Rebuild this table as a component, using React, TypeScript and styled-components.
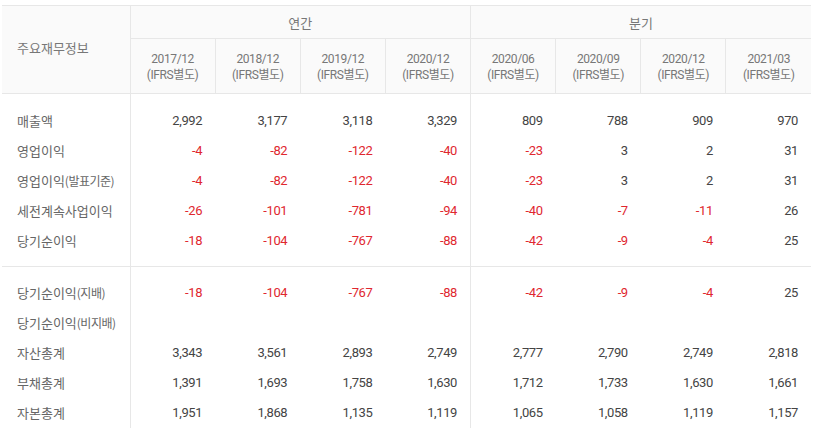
import React from 'react';
import styled, {createGlobalStyle} from 'styled-components';

const GlobalStyle = createGlobalStyle`
	body {
		margin: 0;
		background: #fff;
		font-family: Roboto, 'Noto Sans CJK KR', sans-serif;
	}
`;

const Wrapper = styled.div`
	padding: 5px 8px 0 2px;
`;

const Table = styled.table`
	width: 809px;
	border-collapse: collapse;
	table-layout: fixed;
	border-top: 1px solid #e7e7e7;
	font-size: 13px;
`;

const HeadCell = styled.th<{$left?: boolean; $edge?: boolean}>`
	background: #fafafa;
	color: #777;
	font-weight: normal;
	font-family: 'Noto Sans CJK KR', sans-serif;
	font-size: 13px;
	text-align: ${(p) => (p.$left ? 'left' : 'center')};
	padding: ${(p) => (p.$left ? '0 0 4px 15px' : '0')};
	border-bottom: 1px solid #e7e7e7;
	border-left: ${(p) => (p.$edge ? 'none' : '1px solid #e7e7e7')};
`;

const GroupRow = styled.tr`
	height: 33px;
`;

const PeriodRow = styled.tr`
	height: 55px;
`;

const PeriodCell = styled(HeadCell)`
	font-family: Roboto, 'Noto Sans CJK KR', sans-serif;
	font-size: 12px;
	line-height: 16px;
	letter-spacing: -0.4px;
	padding-top: 2px;
`;

const Spacer = styled.tr<{$h: number; $line?: boolean}>`
	height: ${(p) => p.$h}px;
	border-bottom: ${(p) => (p.$line ? '1px solid #e7e7e7' : 'none')};
`;

const SpacerCell = styled.td<{$divider?: boolean}>`
	padding: 0;
	border-right: ${(p) => (p.$divider ? '1px solid #e7e7e7' : 'none')};
`;

const DataRow = styled.tr`
	height: 30px;
`;

const Label = styled.td`
	padding: 0 0 0 15px;
	color: #666;
	font-family: 'Noto Sans CJK KR', sans-serif;
	font-size: 13px;
	white-space: nowrap;
	border-right: 1px solid #e7e7e7;
`;

const Small = styled.span`
	font-size: 12px;
	letter-spacing: -0.5px;
`;

const Num = styled.td<{$neg?: boolean; $divider?: boolean}>`
	padding: 0 13px 0 0;
	text-align: right;
	color: ${(p) => (p.$neg ? '#e0272f' : '#444')};
	font-family: Roboto, sans-serif;
	font-size: 13px;
	letter-spacing: -0.4px;
	border-right: ${(p) => (p.$divider ? '1px solid #e7e7e7' : 'none')};
`;

const periods = ['2017/12', '2018/12', '2019/12', '2020/12', '2020/06', '2020/09', '2020/12', '2021/03'];

type Row = {label: string; sub?: string; values: (number | null)[]};

const groupA: Row[] = [
	{label: '매출액', values: [2992, 3177, 3118, 3329, 809, 788, 909, 970]},
	{label: '영업이익', values: [-4, -82, -122, -40, -23, 3, 2, 31]},
	{label: '영업이익', sub: '(발표기준)', values: [-4, -82, -122, -40, -23, 3, 2, 31]},
	{label: '세전계속사업이익', values: [-26, -101, -781, -94, -40, -7, -11, 26]},
	{label: '당기순이익', values: [-18, -104, -767, -88, -42, -9, -4, 25]},
];

const groupB: Row[] = [
	{label: '당기순이익', sub: '(지배)', values: [-18, -104, -767, -88, -42, -9, -4, 25]},
	{label: '당기순이익', sub: '(비지배)', values: [null, null, null, null, null, null, null, null]},
	{label: '자산총계', values: [3343, 3561, 2893, 2749, 2777, 2790, 2749, 2818]},
	{label: '부채총계', values: [1391, 1693, 1758, 1630, 1712, 1733, 1630, 1661]},
	{label: '자본총계', values: [1951, 1868, 1135, 1119, 1065, 1058, 1119, 1157]},
];

const SpacerLine = ({h, line}: {h: number; line?: boolean}) => (
	<Spacer $h={h} $line={line}>
		<SpacerCell $divider />
		<SpacerCell />
		<SpacerCell />
		<SpacerCell />
		<SpacerCell $divider />
		<SpacerCell />
		<SpacerCell />
		<SpacerCell />
		<SpacerCell />
	</Spacer>
);

const renderRows = (rows: Row[]) =>
	rows.map((row, i) => (
		<DataRow key={i}>
			<Label>
				{row.label}
				{row.sub ? <Small>{row.sub}</Small> : null}
			</Label>
			{row.values.map((v, j) => (
				<Num key={j} $neg={v !== null && v < 0} $divider={j === 3}>
					{v === null ? '' : v.toLocaleString('en-US')}
				</Num>
			))}
		</DataRow>
	));

export default function App() {
	return (
		<Wrapper>
			<GlobalStyle />
			<Table>
				<colgroup>
					<col style={{width: 128}} />
					{periods.map((p, i) => (
						<col key={i} />
					))}
				</colgroup>
				<thead>
					<GroupRow>
						<HeadCell $left $edge rowSpan={2}>
							주요재무정보
						</HeadCell>
						<HeadCell colSpan={4}>연간</HeadCell>
						<HeadCell colSpan={4}>분기</HeadCell>
					</GroupRow>
					<PeriodRow>
						{periods.map((p, i) => (
							<PeriodCell key={i}>
								{p}
								<br />
								(IFRS별도)
							</PeriodCell>
						))}
					</PeriodRow>
				</thead>
				<tbody>
					<SpacerLine h={12} />
					{renderRows(groupA)}
					<SpacerLine h={11} line />
					<SpacerLine h={11} />
					{renderRows(groupB)}
				</tbody>
			</Table>
		</Wrapper>
	);
}
